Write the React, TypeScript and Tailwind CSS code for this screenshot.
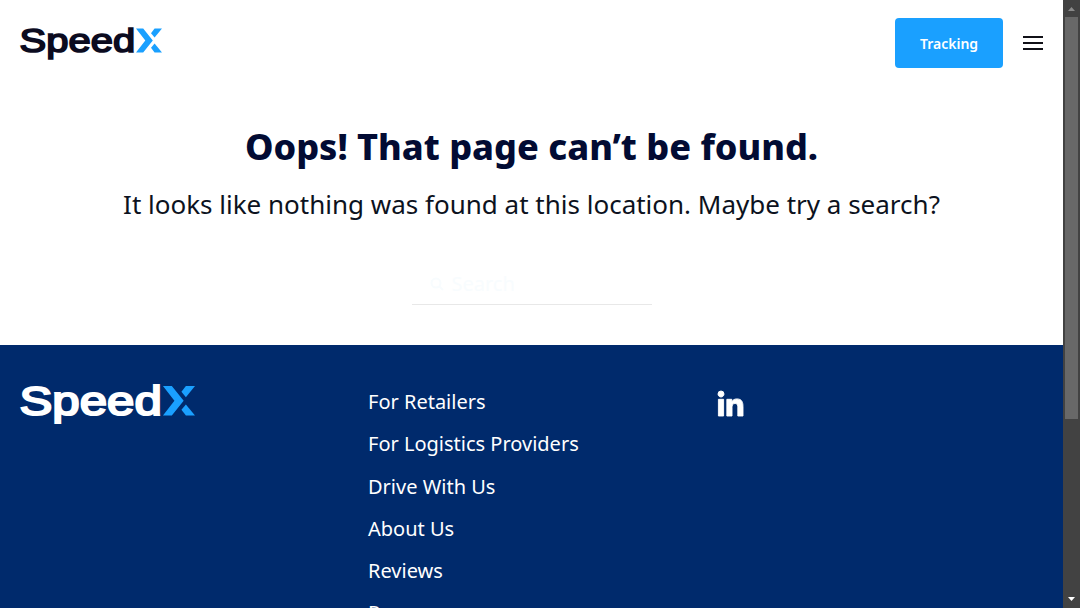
import React from "react";

function Logo({ className, color }: { className: string; color: string }) {
  return (
    <svg viewBox="0 0 142 33" className={className} overflow="visible" role="img" aria-label="SpeedX">
      <text
        x="-0.4"
        y="25"
        fontFamily="Liberation Sans, Arial, sans-serif"
        fontSize="33.5"
        fontWeight="400"
        textLength="115.5"
        lengthAdjust="spacingAndGlyphs"
        fill={color}
        stroke={color}
        strokeWidth="1.7"
      >
        Speed
      </text>
      <g fill="#1aa0ff">
        <path d="M116 1.4H123.2L132.8 13.4L123.2 25.5H116L125.3 13.4Z" />
        <path d="M134.6 1.4H142L134.6 10.6L131 6.2Z" />
        <path d="M134.6 16.4L142 25.5H134.6L131 20.8Z" />
      </g>
    </svg>
  );
}

const links = ["For Retailers", "For Logistics Providers", "Drive With Us", "About Us", "Reviews", "Resources"];

export default function App() {
  return (
    <div className="flex h-[608px] w-[1080px] overflow-hidden bg-white font-['Noto_Sans',sans-serif]">
      <div className="flex w-[1063px] flex-col">
        <header className="flex h-[86px] shrink-0 items-center justify-between px-5">
          <Logo className="h-[33px] w-[142px]" color="#0b0b1f" />
          <div className="flex items-center gap-5">
            <button className="h-[50px] w-[108px] rounded-[4px] bg-[#1aa0ff] pt-0.5 text-sm font-semibold text-white">
              Tracking
            </button>
            <button aria-label="Menu" className="flex w-5 flex-col gap-1">
              <span className="h-0.5 bg-[#111118]" />
              <span className="h-0.5 bg-[#111118]" />
              <span className="h-0.5 bg-[#111118]" />
            </button>
          </div>
        </header>
        <main className="flex h-[259px] shrink-0 flex-col items-center pt-[36px]">
          <h1 className="whitespace-nowrap text-[36px] leading-[50px] font-extrabold text-[#020b33]">
            Oops! That page can’t be found.
          </h1>
          <p className="mt-[14px] whitespace-nowrap text-[26px] leading-[36px] text-[#0c1220]">
            It looks like nothing was found at this location. Maybe try a search?
          </p>
          <div className="mt-[42px] flex h-[41px] w-[240px] items-center gap-2 border-b border-[#e8e8e8] pl-[18px] text-[20px] text-[#f8fcfe]">
            <svg viewBox="0 0 14 14" className="h-[14px] w-[14px]" fill="none" stroke="currentColor" strokeWidth="2">
              <circle cx="6" cy="6" r="4.5" />
              <path d="M9.5 9.5L13 13" />
            </svg>
            Search
          </div>
        </main>
        <footer className="flex grow bg-[#002a6c] px-5 text-white">
          <div className="w-[348px] pt-[39px]">
            <Logo className="h-[41px] w-[175px]" color="#ffffff" />
          </div>
          <nav className="flex w-[349px] flex-col pt-[36px]">
            {links.map((l) => (
              <a key={l} className="h-[42.25px] shrink-0 text-[20px] leading-[42px]">
                {l}
              </a>
            ))}
          </nav>
          <svg viewBox="0 0 448 448" className="mt-[46px] ml-px h-[25px] w-[25px]" overflow="visible" fill="currentColor" stroke="currentColor" strokeWidth="16" aria-label="LinkedIn">
            <path d="M100.28 448H7.4V148.9h92.88zM53.79 108.1C24.09 108.1 0 83.5 0 53.8a53.79 53.79 0 0 1 107.58 0c0 29.7-24.1 54.3-53.79 54.3zM447.9 448h-92.68V302.4c0-34.7-.7-79.2-48.29-79.2-48.29 0-55.69 37.7-55.69 76.7V448h-92.78V148.9h89.08v40.8h1.3c12.4-23.5 42.69-48.3 87.88-48.3 94 0 111.28 61.9 111.28 142.3V448z" />
          </svg>
        </footer>
      </div>
      <div className="flex w-[17px] flex-col items-center justify-between bg-[#424242]">
        <svg viewBox="0 0 17 17" className="h-[17px] w-[17px]"><path d="M5 11L8.5 7L12 11Z" fill="#8a8a8a" /></svg>
        <div className="mb-auto h-[402px] w-[13px] bg-[#686868]" />
        <svg viewBox="0 0 17 17" className="h-[17px] w-[17px]"><path d="M5 6L8.5 10L12 6Z" fill="#ffffff" /></svg>
      </div>
    </div>
  );
}
